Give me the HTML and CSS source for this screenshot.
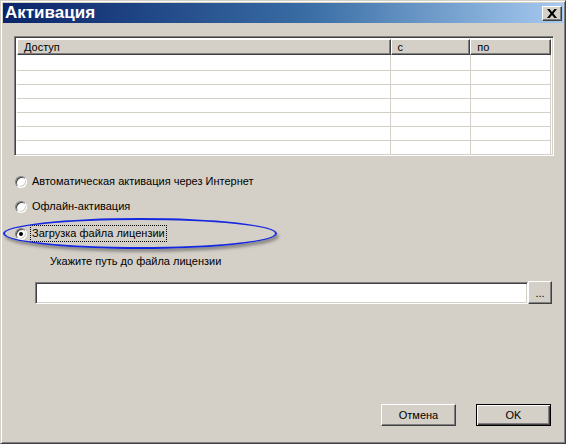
FILE: index.html
```html
<!DOCTYPE html>
<html>
<head>
<meta charset="utf-8">
<link rel="stylesheet" href="styles.css">
</head>
<body>
<div class="window">
  <div class="titlebar">
    <span class="title">Активация</span>
    <button class="close" aria-label="close">
      <svg width="10" height="9" viewBox="0 0 10 9"><path d="M0 0h2.6l2.4 3 2.4-3H10L6.4 4.5 10 9H7.4L5 6 2.6 9H0l3.6-4.5z" fill="#000"/></svg>
    </button>
  </div>
  <div class="content">
    <div class="table">
      <div class="thead">
        <div class="th c1">Доступ</div>
        <div class="th c2">с</div>
        <div class="th c3">по</div>
      </div>
      <div class="tbody">
        <div class="tr first"><div class="td c1"></div><div class="td c2"></div><div class="td c3"></div></div>
        <div class="tr"><div class="td c1"></div><div class="td c2"></div><div class="td c3"></div></div>
        <div class="tr"><div class="td c1"></div><div class="td c2"></div><div class="td c3"></div></div>
        <div class="tr"><div class="td c1"></div><div class="td c2"></div><div class="td c3"></div></div>
        <div class="tr"><div class="td c1"></div><div class="td c2"></div><div class="td c3"></div></div>
        <div class="tr"><div class="td c1"></div><div class="td c2"></div><div class="td c3"></div></div>
        <div class="tr last"><div class="td c1"></div><div class="td c2"></div><div class="td c3"></div></div>
      </div>
    </div>

    <div class="radio r1">
      <span class="rb"></span>
      <span class="rlabel">Автоматическая активация через Интернет</span>
    </div>
    <div class="radio r2">
      <span class="rb"></span>
      <span class="rlabel">Офлайн-активация</span>
    </div>
    <div class="radio r3">
      <span class="rb checked"></span>
      <span class="rlabel focus">Загрузка файла лицензии</span>
      <span class="highlight"></span>
    </div>

    <div class="hint">Укажите путь до файла лицензии</div>
    <div class="pathrow">
      <div class="input"></div>
      <button class="btn browse">...</button>
    </div>

    <div class="footer">
      <button class="btn cancel">Отмена</button>
      <button class="btn ok">OK</button>
    </div>
  </div>
</div>
</body>
</html>
```

FILE: styles.css
```css
html, body {
  margin: 0;
  padding: 0;
  background: #d4d0c8;
}
body {
  font-family: "Liberation Sans", Arial, sans-serif;
  font-size: 11px;
  color: #000;
}
.window {
  width: 566px;
  height: 444px;
  box-sizing: border-box;
  border-style: solid;
  border-width: 1px;
  border-color: #d4d0c8 #404040 #404040 #d4d0c8;
  box-shadow: inset 1px 1px #fff, inset -1px -1px #808080;
  padding: 2px;
  display: flex;
  flex-direction: column;
  background: #d4d0c8;
}
.titlebar {
  height: 20px;
  display: flex;
  align-items: center;
  justify-content: space-between;
  background: linear-gradient(to right, #0a246a 0%, #3a6ea5 55%, #a6caf0 100%);
  padding: 0 1px 0 2px;
  flex: none;
}
.title {
  color: #fff;
  font-weight: bold;
  font-size: 17px;
  line-height: 20px;
}
.close {
  width: 20px;
  height: 15px;
  padding: 0;
  margin: 0;
  background: #d4d0c8;
  border-style: solid;
  border-width: 1px;
  border-color: #fff #404040 #404040 #fff;
  box-shadow: inset -1px -1px #808080;
  display: flex;
  align-items: center;
  justify-content: center;
  box-sizing: border-box;
}
.close svg { display: block; }
.content {
  flex: 1;
  display: flex;
  flex-direction: column;
  padding: 13px 11px 0 11px;
  position: relative;
}
.table {
  width: 540px;
  height: 120px;
  box-sizing: border-box;
  border-style: solid;
  border-width: 1px;
  border-color: #808080 #fff #fff #808080;
  box-shadow: inset 1px 1px #404040, inset -1px -1px #d4d0c8;
  padding: 2px;
  background: #fff;
  display: flex;
  flex-direction: column;
  flex: none;
}
.thead {
  display: flex;
  height: 16px;
  flex: none;
}
.th {
  box-sizing: border-box;
  height: 16px;
  background: #d4d0c8;
  border-style: solid;
  border-width: 1px;
  border-color: #fff #404040 #404040 #fff;
  box-shadow: inset -1px -1px #808080;
  padding-left: 6px;
  line-height: 14px;
}
.c1 { width: 375px; }
.c2 { width: 80px; padding-left: 6px; }
.c3 { width: 81px; padding-left: 6px; }
.tbody { display: flex; flex-direction: column; }
.tr {
  display: flex;
  height: 14px;
  box-sizing: border-box;
  border-bottom: 1px solid #d4d0c8;
}
.tr.first { height: 16px; }
.tr.last { border-bottom: none; height: 13px; }
.td {
  box-sizing: border-box;
  border-right: 1px solid #d4d0c8;
}
.td.c3 { width: 80px; }

.radio {
  display: flex;
  align-items: center;
  height: 17px;
  padding-left: 1px;
  position: relative;
}
.r1 { margin-top: 17px; }
.r2 { margin-top: 8px; }
.r3 { margin-top: 10px; }
.rb {
  width: 12px;
  height: 12px;
  box-sizing: border-box;
  border-radius: 50%;
  border-style: solid;
  border-width: 1px;
  border-color: #808080 #fff #fff #808080;
  box-shadow: inset 1px 1px #404040, inset -1px -1px #d4d0c8;
  background: #fff;
  margin-right: 5px;
  flex: none;
  position: relative;
}
.rb.checked::after {
  content: "";
  position: absolute;
  left: 3px;
  top: 3px;
  width: 4px;
  height: 4px;
  border-radius: 50%;
  background: #000;
}
.rlabel { line-height: 15px; white-space: nowrap; }
.rlabel.focus {
  outline: 1px dotted #000;
  outline-offset: 0;
  padding: 0 1px;
  margin-left: -1px;
}
.highlight {
  position: absolute;
  left: -11px;
  top: -7px;
  width: 274px;
  height: 31px;
  box-sizing: border-box;
  border: 2px solid #1428e0;
  border-radius: 50%;
  box-shadow: 2px 3px 3px rgba(60, 60, 60, 0.45);
  pointer-events: none;
}
.hint {
  margin-top: 12px;
  margin-left: 36px;
  line-height: 15px;
}
.pathrow {
  margin-top: 12px;
  margin-left: 21px;
  display: flex;
  align-items: center;
}
.input {
  width: 493px;
  height: 22px;
  box-sizing: border-box;
  border-style: solid;
  border-width: 1px;
  border-color: #808080 #fff #fff #808080;
  box-shadow: inset 1px 1px #404040, inset -1px -1px #d4d0c8;
  background: #fff;
}
.btn {
  font-family: "Liberation Sans", Arial, sans-serif;
  font-size: 11px;
  color: #000;
  background: #d4d0c8;
  box-sizing: border-box;
  border-style: solid;
  border-width: 1px;
  border-color: #fff #404040 #404040 #fff;
  box-shadow: inset -1px -1px #808080;
  padding: 0;
  margin: 0;
}
.browse {
  width: 24px;
  height: 23px;
  line-height: 18px;
}
.footer {
  margin-top: auto;
  margin-bottom: 15px;
  display: flex;
  justify-content: flex-end;
  gap: 20px;
  padding-right: 1px;
}
.cancel, .ok {
  width: 75px;
  height: 22px;
}
.ok {
  border: 1px solid #000;
  box-shadow: inset 1px 1px #fff, inset -1px -1px #404040, inset -2px -2px #808080;
}
```
